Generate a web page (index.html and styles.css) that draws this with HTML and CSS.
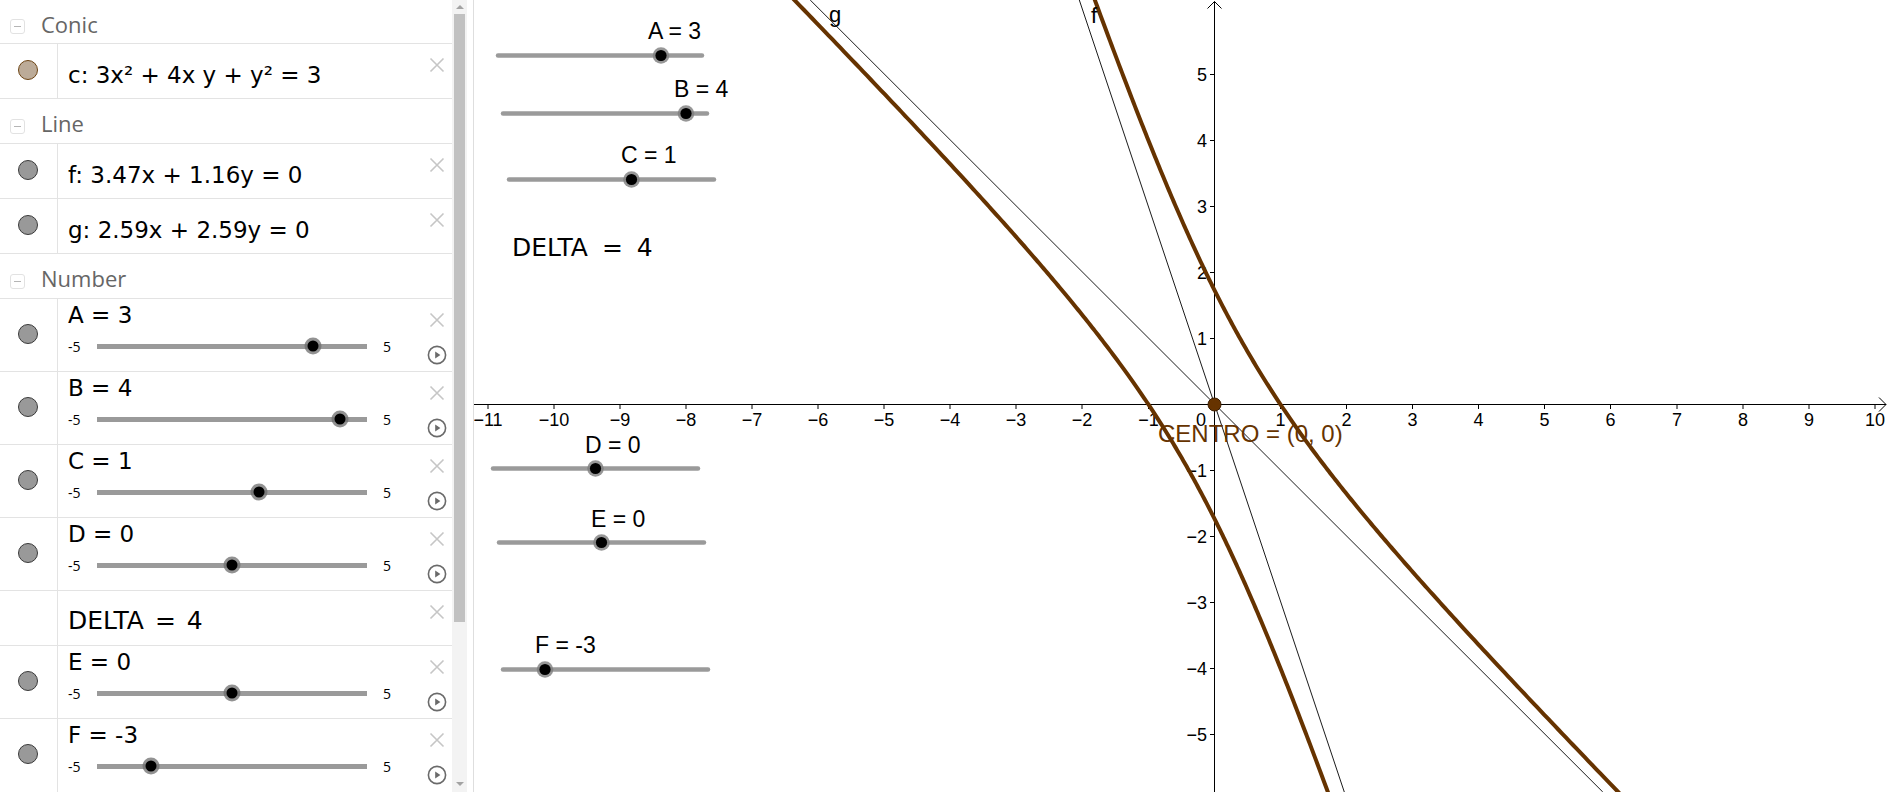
FILE: index.html
```html
<!DOCTYPE html>
<html lang="en">
<head>
<meta charset="utf-8">
<title>GeoGebra - Conic</title>
<link rel="stylesheet" href="styles.css">
</head>
<body>
<div class="app">
  <aside class="algebra">
    <div class="list">
      <div class="group-head first"><span class="toggle"></span><span class="group-name">Conic</span></div>
      <div class="item eq">
        <div class="marker-col"><span class="marker conic"></span></div>
        <div class="content"><div class="formula">c: 3x² + 4x y + y² = 3</div></div>
        <div class="actions"><svg class="close" viewBox="0 0 16 16"><path d="M1.5 1.5L14.5 14.5M14.5 1.5L1.5 14.5"/></svg></div>
      </div>

      <div class="group-head"><span class="toggle"></span><span class="group-name">Line</span></div>
      <div class="item eq">
        <div class="marker-col"><span class="marker"></span></div>
        <div class="content"><div class="formula">f: 3.47x + 1.16y = 0</div></div>
        <div class="actions"><svg class="close" viewBox="0 0 16 16"><path d="M1.5 1.5L14.5 14.5M14.5 1.5L1.5 14.5"/></svg></div>
      </div>
      <div class="item eq">
        <div class="marker-col"><span class="marker"></span></div>
        <div class="content"><div class="formula">g: 2.59x + 2.59y = 0</div></div>
        <div class="actions"><svg class="close" viewBox="0 0 16 16"><path d="M1.5 1.5L14.5 14.5M14.5 1.5L1.5 14.5"/></svg></div>
      </div>

      <div class="group-head"><span class="toggle"></span><span class="group-name">Number</span></div>

      <div class="item slider">
        <div class="marker-col"><span class="marker"></span></div>
        <div class="content">
          <div class="name">A = 3</div>
          <div class="slider-line"><span class="min">-5</span><span class="track"><span class="knob" style="left:80%"></span></span><span class="max">5</span></div>
        </div>
        <div class="actions"><svg class="close" viewBox="0 0 16 16"><path d="M1.5 1.5L14.5 14.5M14.5 1.5L1.5 14.5"/></svg><svg class="play" viewBox="0 0 20 20"><circle cx="10" cy="10" r="8.6"/><path d="M8.2 6.6L13.4 10L8.2 13.4Z"/></svg></div>
      </div>
      <div class="item slider">
        <div class="marker-col"><span class="marker"></span></div>
        <div class="content">
          <div class="name">B = 4</div>
          <div class="slider-line"><span class="min">-5</span><span class="track"><span class="knob" style="left:90%"></span></span><span class="max">5</span></div>
        </div>
        <div class="actions"><svg class="close" viewBox="0 0 16 16"><path d="M1.5 1.5L14.5 14.5M14.5 1.5L1.5 14.5"/></svg><svg class="play" viewBox="0 0 20 20"><circle cx="10" cy="10" r="8.6"/><path d="M8.2 6.6L13.4 10L8.2 13.4Z"/></svg></div>
      </div>
      <div class="item slider">
        <div class="marker-col"><span class="marker"></span></div>
        <div class="content">
          <div class="name">C = 1</div>
          <div class="slider-line"><span class="min">-5</span><span class="track"><span class="knob" style="left:60%"></span></span><span class="max">5</span></div>
        </div>
        <div class="actions"><svg class="close" viewBox="0 0 16 16"><path d="M1.5 1.5L14.5 14.5M14.5 1.5L1.5 14.5"/></svg><svg class="play" viewBox="0 0 20 20"><circle cx="10" cy="10" r="8.6"/><path d="M8.2 6.6L13.4 10L8.2 13.4Z"/></svg></div>
      </div>
      <div class="item slider">
        <div class="marker-col"><span class="marker"></span></div>
        <div class="content">
          <div class="name">D = 0</div>
          <div class="slider-line"><span class="min">-5</span><span class="track"><span class="knob" style="left:50%"></span></span><span class="max">5</span></div>
        </div>
        <div class="actions"><svg class="close" viewBox="0 0 16 16"><path d="M1.5 1.5L14.5 14.5M14.5 1.5L1.5 14.5"/></svg><svg class="play" viewBox="0 0 20 20"><circle cx="10" cy="10" r="8.6"/><path d="M8.2 6.6L13.4 10L8.2 13.4Z"/></svg></div>
      </div>
      <div class="item eq">
        <div class="marker-col"></div>
        <div class="content"><div class="formula delta">DELTA = 4</div></div>
        <div class="actions"><svg class="close" viewBox="0 0 16 16"><path d="M1.5 1.5L14.5 14.5M14.5 1.5L1.5 14.5"/></svg></div>
      </div>
      <div class="item slider">
        <div class="marker-col"><span class="marker"></span></div>
        <div class="content">
          <div class="name">E = 0</div>
          <div class="slider-line"><span class="min">-5</span><span class="track"><span class="knob" style="left:50%"></span></span><span class="max">5</span></div>
        </div>
        <div class="actions"><svg class="close" viewBox="0 0 16 16"><path d="M1.5 1.5L14.5 14.5M14.5 1.5L1.5 14.5"/></svg><svg class="play" viewBox="0 0 20 20"><circle cx="10" cy="10" r="8.6"/><path d="M8.2 6.6L13.4 10L8.2 13.4Z"/></svg></div>
      </div>
      <div class="item slider last">
        <div class="marker-col"><span class="marker"></span></div>
        <div class="content">
          <div class="name">F = -3</div>
          <div class="slider-line"><span class="min">-5</span><span class="track"><span class="knob" style="left:20%"></span></span><span class="max">5</span></div>
        </div>
        <div class="actions"><svg class="close" viewBox="0 0 16 16"><path d="M1.5 1.5L14.5 14.5M14.5 1.5L1.5 14.5"/></svg><svg class="play" viewBox="0 0 20 20"><circle cx="10" cy="10" r="8.6"/><path d="M8.2 6.6L13.4 10L8.2 13.4Z"/></svg></div>
      </div>
    </div>
    <div class="scrollbar">
      <span class="arrow up"></span>
      <div class="sb-thumb"></div>
      <div class="sb-rest"></div>
      <span class="arrow down"></span>
    </div>
  </aside>

  <main class="graphics">
    <svg class="canvas" viewBox="474 0 1414 792" width="1414" height="792">
      <!-- axes -->
      <g class="axis">
        <path d="M474 404.5H1886M1879 397.5L1886 404.5L1879 411.5"/>
        <path d="M1214.5 792V1.5M1207.5 8.5L1214.5 1.5L1221.5 8.5"/>
        <path d="M488 404.5v4.5M554 404.5v4.5M620 404.5v4.5M686 404.5v4.5M752 404.5v4.5M818 404.5v4.5M884 404.5v4.5M950 404.5v4.5M1016 404.5v4.5M1082 404.5v4.5M1148.5 404.5v4.5M1280.5 404.5v4.5M1346.5 404.5v4.5M1412.5 404.5v4.5M1478.5 404.5v4.5M1544.5 404.5v4.5M1610.5 404.5v4.5M1677 404.5v4.5M1743 404.5v4.5M1809 404.5v4.5M1875 404.5v4.5"/>
        <path d="M1210 74.5h4.5M1210 140.5h4.5M1210 206.5h4.5M1210 272.5h4.5M1210 338.5h4.5M1210 470.5h4.5M1210 536.5h4.5M1210 602.5h4.5M1210 668.5h4.5M1210 734.5h4.5"/>
      </g>
      <g class="axis-label xl">
        <text x="488" y="426">−11</text>
        <text x="554" y="426">−10</text>
        <text x="620" y="426">−9</text>
        <text x="686" y="426">−8</text>
        <text x="752" y="426">−7</text>
        <text x="818" y="426">−6</text>
        <text x="884" y="426">−5</text>
        <text x="950" y="426">−4</text>
        <text x="1016" y="426">−3</text>
        <text x="1082" y="426">−2</text>
        <text x="1148.5" y="426">−1</text>
        <text x="1280.5" y="426">1</text>
        <text x="1346.5" y="426">2</text>
        <text x="1412.5" y="426">3</text>
        <text x="1478.5" y="426">4</text>
        <text x="1544.5" y="426">5</text>
        <text x="1610.5" y="426">6</text>
        <text x="1677" y="426">7</text>
        <text x="1743" y="426">8</text>
        <text x="1809" y="426">9</text>
        <text x="1875" y="426">10</text>
      </g>
      <g class="axis-label yl">
        <text x="1206" y="426">0</text>
        <text x="1207" y="81">5</text>
        <text x="1207" y="147">4</text>
        <text x="1207" y="213">3</text>
        <text x="1207" y="279">2</text>
        <text x="1207" y="345">1</text>
        <text x="1207" y="477">−1</text>
        <text x="1207" y="543">−2</text>
        <text x="1207" y="609">−3</text>
        <text x="1207" y="675">−4</text>
        <text x="1207" y="741">−5</text>
      </g>

      <!-- asymptote lines -->
      <path class="thin-line" d="M1079.3 0L1344.3 792"/>
      <path class="thin-line" d="M810.2 0L1602.8 792"/>

      <!-- hyperbola -->
      <path id="br1" class="conic" d=""/>
      <path id="br2" class="conic" d=""/>

      <text class="obj-label" x="829" y="22">g</text>
      <text class="obj-label" x="1091" y="23">f</text>

      <circle class="point" cx="1214.5" cy="404.5" r="6.5"/>
      <text class="point-label" x="1158" y="442">CENTRO = (0, 0)</text>

      <!-- sliders on canvas -->
      <g class="gslider">
        <line x1="498" y1="55.5" x2="702" y2="55.5"/>
        <circle class="ring" cx="661" cy="55.5" r="8.3"/>
        <circle class="dot" cx="661" cy="55.5" r="5.6"/>
        <text x="648" y="39">A = 3</text>
      </g>
      <g class="gslider">
        <line x1="503" y1="113.5" x2="707" y2="113.5"/>
        <circle class="ring" cx="686" cy="113.5" r="8.3"/>
        <circle class="dot" cx="686" cy="113.5" r="5.6"/>
        <text x="674" y="97">B = 4</text>
      </g>
      <g class="gslider">
        <line x1="509" y1="179.5" x2="714" y2="179.5"/>
        <circle class="ring" cx="631.5" cy="179.5" r="8.3"/>
        <circle class="dot" cx="631.5" cy="179.5" r="5.6"/>
        <text x="621" y="163">C = 1</text>
      </g>
      <text class="delta-label" x="512" y="256">DELTA = 4</text>
      <g class="gslider">
        <line x1="493" y1="468.5" x2="698" y2="468.5"/>
        <circle class="ring" cx="595.5" cy="468.5" r="8.3"/>
        <circle class="dot" cx="595.5" cy="468.5" r="5.6"/>
        <text x="585" y="453">D = 0</text>
      </g>
      <g class="gslider">
        <line x1="499" y1="542.5" x2="704" y2="542.5"/>
        <circle class="ring" cx="601.5" cy="542.5" r="8.3"/>
        <circle class="dot" cx="601.5" cy="542.5" r="5.6"/>
        <text x="591" y="527">E = 0</text>
      </g>
      <g class="gslider">
        <line x1="503" y1="669.5" x2="708" y2="669.5"/>
        <circle class="ring" cx="545" cy="669.5" r="8.3"/>
        <circle class="dot" cx="545" cy="669.5" r="5.6"/>
        <text x="535" y="653">F = -3</text>
      </g>
    </svg>
  </main>
</div>
<script src="script.js"></script>
</body>
</html>
```

FILE: styles.css
```css
html, body {
  margin: 0;
  padding: 0;
  background: #ffffff;
  overflow: hidden;
}

.app {
  display: flex;
  width: 1888px;
  height: 792px;
}

/* ---------- Algebra view ---------- */
.algebra {
  flex: none;
  width: 473px;
  height: 792px;
  display: flex;
  border-right: 1px solid #dedede;
  background: #ffffff;
}

.list {
  flex: none;
  width: 452px;
  height: 792px;
  overflow: hidden;
}

.group-head {
  box-sizing: border-box;
  height: 45px;
  padding: 4px 0 0 10px;
  display: flex;
  align-items: center;
  border-bottom: 1px solid #e3e3e3;
}

.group-head.first {
  height: 44px;
}

.toggle {
  position: relative;
  flex: none;
  box-sizing: border-box;
  width: 15px;
  height: 15px;
  margin-top: 6px;
  border: 1px solid #e2e2e2;
  border-radius: 3px;
}

.toggle::before {
  content: "";
  position: absolute;
  left: 3px;
  top: 6px;
  width: 7px;
  height: 1px;
  background: #b5b5b5;
}

.group-name {
  margin-left: 16px;
  font-family: "Open Sans", "DejaVu Sans", sans-serif;
  font-size: 22px;
  line-height: 30px;
  color: #666666;
}

.item {
  box-sizing: border-box;
  display: flex;
  border-bottom: 1px solid #e3e3e3;
}

.item.eq {
  height: 55px;
}

.item.slider {
  height: 73px;
}

.item.last {
  border-bottom: none;
}

.marker-col {
  flex: none;
  width: 57px;
  border-right: 1px solid #e3e3e3;
}

.marker {
  display: block;
  box-sizing: border-box;
  width: 20px;
  height: 20px;
  margin: 16px 0 0 18px;
  border: 1px solid #3a3a3a;
  border-radius: 50%;
  background: #999999;
}

.slider .marker {
  margin-top: 25px;
}

.marker.conic {
  background: #bcab98;
  border-color: #6e4515;
}

.content {
  flex: 1;
  min-width: 0;
  padding-left: 10px;
  color: #000000;
}

.formula {
  padding-top: 16px;
  font-family: "DejaVu Sans", sans-serif;
  font-size: 23px;
  line-height: 30px;
  white-space: nowrap;
}

.formula.delta {
  padding-top: 15px;
  font-size: 25px;
  word-spacing: 3px;
}

.name {
  padding-top: 2px;
  font-family: "DejaVu Sans", sans-serif;
  font-size: 23px;
  line-height: 28px;
  white-space: nowrap;
}

.slider-line {
  display: flex;
  align-items: center;
  height: 34px;
}

.min, .max {
  font-family: "Open Sans", "DejaVu Sans", sans-serif;
  font-size: 14px;
  color: #000000;
}

.min {
  width: 29px;
}

.max {
  margin-left: 16px;
}

.track {
  position: relative;
  flex: none;
  width: 270px;
  height: 5px;
  background: #9a9a9a;
}

.knob {
  position: absolute;
  top: 50%;
  width: 11px;
  height: 11px;
  border-radius: 50%;
  background: #000000;
  transform: translate(-50%, -50%);
  box-shadow: 0 0 0 3px rgba(110, 110, 110, 0.75);
}

.actions {
  flex: none;
  width: 30px;
  display: flex;
  flex-direction: column;
  align-items: center;
  padding-top: 13px;
}

.close {
  display: block;
  width: 16px;
  height: 16px;
}

.close path {
  stroke: #c6c6c6;
  stroke-width: 1.6;
  fill: none;
}

.play {
  display: block;
  width: 20px;
  height: 20px;
  margin-top: 17px;
}

.play circle {
  fill: none;
  stroke: #6a6a6a;
  stroke-width: 1.6;
}

.play path {
  fill: #6a6a6a;
}

/* scrollbar */
.scrollbar {
  flex: none;
  width: 15px;
  height: 792px;
  display: flex;
  flex-direction: column;
  align-items: center;
  background: #f3f3f3;
}

.arrow {
  flex: none;
  width: 0;
  height: 0;
  border-left: 4px solid transparent;
  border-right: 4px solid transparent;
}

.arrow.up {
  margin-top: 5px;
  margin-bottom: 5px;
  border-bottom: 4px solid #a3a3a3;
}

.arrow.down {
  margin-top: 5px;
  margin-bottom: 6px;
  border-top: 4px solid #a3a3a3;
}

.sb-thumb {
  flex: none;
  width: 11px;
  height: 608px;
  background: #c1c1c1;
}

.sb-rest {
  flex: 1;
}

/* ---------- Graphics view ---------- */
.graphics {
  flex: 1;
  height: 792px;
  background: #ffffff;
}

.canvas {
  display: block;
}

.axis path {
  fill: none;
  stroke: #000000;
  stroke-width: 1;
}

.axis-label {
  font-family: "Liberation Sans", Arial, sans-serif;
  font-size: 18px;
  fill: #000000;
}

.xl text {
  text-anchor: middle;
}

.yl text {
  text-anchor: end;
}

.thin-line {
  fill: none;
  stroke: #000000;
  stroke-width: 0.9;
}

.conic {
  fill: none;
  stroke: #663300;
  stroke-width: 4;
  stroke-linejoin: round;
}

.obj-label {
  font-family: "Liberation Sans", Arial, sans-serif;
  font-size: 22px;
  fill: #000000;
}

.point {
  fill: #663300;
  stroke: #3b1d00;
  stroke-width: 1;
}

.point-label {
  font-family: "Liberation Sans", Arial, sans-serif;
  font-size: 24px;
  fill: #663300;
}

.gslider line {
  stroke: #9a9a9a;
  stroke-width: 4.5;
  stroke-linecap: round;
}

.gslider .ring {
  fill: #7d7d7d;
  opacity: 0.8;
}

.gslider .dot {
  fill: #000000;
}

.gslider text {
  font-family: "Liberation Sans", Arial, sans-serif;
  font-size: 23px;
  fill: #000000;
}

.delta-label {
  font-family: "DejaVu Sans", sans-serif;
  font-size: 25px;
  word-spacing: 6px;
  fill: #000000;
}
```

FILE: script.js
```js
(function () {
  var ox = 1214.5, oy = 404.5, ux = 66.05, uy = 66;
  // c: 3x² + 4xy + y² = 3  <=>  (3x + y)(x + y) = 3
  function branch(sign) {
    var d = "";
    var n = 700;
    for (var i = 0; i <= n; i++) {
      var t = sign * Math.exp(-3.5 + 7 * i / n);
      var u = t, v = 3 / t;
      var x = (u - v) / 2;
      var y = (3 * v - u) / 2;
      var X = ox + ux * x;
      var Y = oy - uy * y;
      d += (i ? "L" : "M") + X.toFixed(2) + " " + Y.toFixed(2);
    }
    return d;
  }
  document.getElementById("br1").setAttribute("d", branch(1));
  document.getElementById("br2").setAttribute("d", branch(-1));
})();
```
